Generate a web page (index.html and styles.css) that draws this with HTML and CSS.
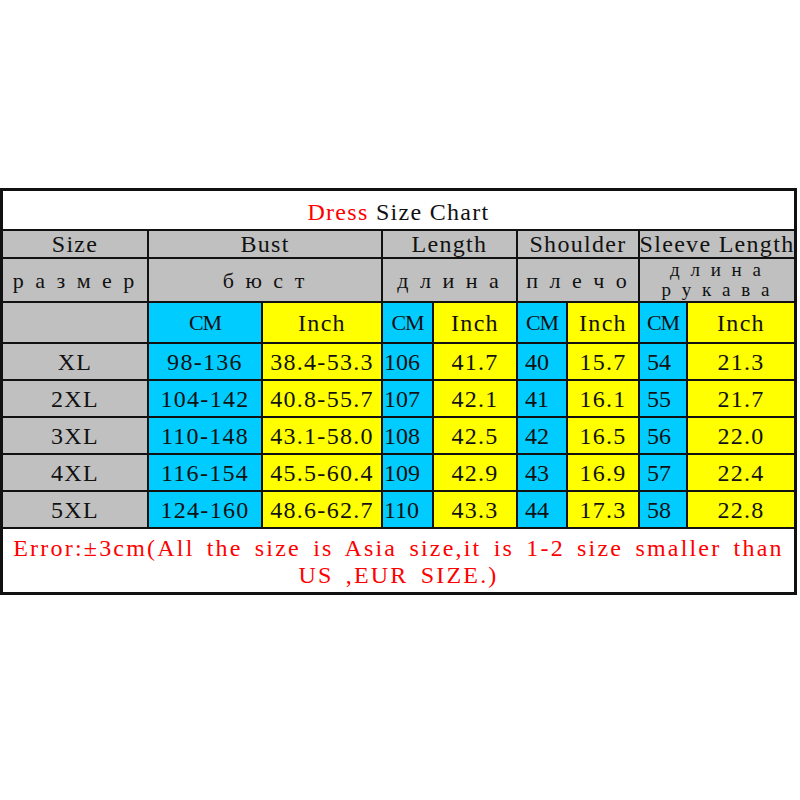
FILE: index.html
```html
<!DOCTYPE html>
<html lang="en">
<head>
  <meta charset="UTF-8" />
  <title>Dress Size Chart</title>
  <link rel="stylesheet" href="styles.css">
</head>
<body>
  <main class="page">
    <div class="chart">
      <div class="cell title full"><span class="red">Dress</span>&nbsp;Size Chart</div>

      <div class="cell head">Size</div>
      <div class="cell head span2">Bust</div>
      <div class="cell head span2">Length</div>
      <div class="cell head span2">Shoulder</div>
      <div class="cell head span2">Sleeve Length</div>

      <div class="cell head ru">р а з м е р</div>
      <div class="cell head span2 ru">б ю с т</div>
      <div class="cell head span2 ru">д л и н а</div>
      <div class="cell head span2 ru">п л е ч о</div>
      <div class="cell head span2 ru two-line">д л и н а<br>р у к а в а</div>

      <div class="cell head"></div>
      <div class="cell cm unit">CM</div>
      <div class="cell inch">Inch</div>
      <div class="cell cm unit">CM</div>
      <div class="cell inch">Inch</div>
      <div class="cell cm unit">CM</div>
      <div class="cell inch">Inch</div>
      <div class="cell cm unit">CM</div>
      <div class="cell inch">Inch</div>

      <div class="cell head">XL</div>
      <div class="cell cm">98-136</div>
      <div class="cell inch">38.4-53.3</div>
      <div class="cell cm left">106</div>
      <div class="cell inch">41.7</div>
      <div class="cell cm left pad">40</div>
      <div class="cell inch">15.7</div>
      <div class="cell cm left pad">54</div>
      <div class="cell inch">21.3</div>

      <div class="cell head">2XL</div>
      <div class="cell cm">104-142</div>
      <div class="cell inch">40.8-55.7</div>
      <div class="cell cm left">107</div>
      <div class="cell inch">42.1</div>
      <div class="cell cm left pad">41</div>
      <div class="cell inch">16.1</div>
      <div class="cell cm left pad">55</div>
      <div class="cell inch">21.7</div>

      <div class="cell head">3XL</div>
      <div class="cell cm">110-148</div>
      <div class="cell inch">43.1-58.0</div>
      <div class="cell cm left">108</div>
      <div class="cell inch">42.5</div>
      <div class="cell cm left pad">42</div>
      <div class="cell inch">16.5</div>
      <div class="cell cm left pad">56</div>
      <div class="cell inch">22.0</div>

      <div class="cell head">4XL</div>
      <div class="cell cm">116-154</div>
      <div class="cell inch">45.5-60.4</div>
      <div class="cell cm left">109</div>
      <div class="cell inch">42.9</div>
      <div class="cell cm left pad">43</div>
      <div class="cell inch">16.9</div>
      <div class="cell cm left pad">57</div>
      <div class="cell inch">22.4</div>

      <div class="cell head">5XL</div>
      <div class="cell cm">124-160</div>
      <div class="cell inch">48.6-62.7</div>
      <div class="cell cm left">110</div>
      <div class="cell inch">43.3</div>
      <div class="cell cm left pad">44</div>
      <div class="cell inch">17.3</div>
      <div class="cell cm left pad">58</div>
      <div class="cell inch">22.8</div>

      <div class="cell note full">Error:±3cm(All the size is Asia size,it is 1-2 size smaller than US ,EUR SIZE.)</div>
    </div>
  </main>
</body>
</html>
```

FILE: styles.css
```css
body {
  margin: 0;
  padding: 0;
  background: #fff;
  font-family: "Liberation Serif", "Times New Roman", serif;
  font-size: 24px;
  letter-spacing: 1.3px;
  color: #111;
}
.page {
  padding: 188px 3px 0 0;
}
.chart {
  display: grid;
  grid-template-columns: 144px 112px 118px 49px 82px 48px 70px 46px 106px;
  grid-template-rows: 38px 26px 42px 39px repeat(5, 35px) 63px;
  gap: 2px;
  border: 3px solid #111;
  background: #111;
  width: 791px;
}
.cell {
  display: flex;
  align-items: center;
  justify-content: center;
  white-space: nowrap;
  overflow: hidden;
  line-height: 24px;
}
.full {
  grid-column: 1 / -1;
}
.span2 {
  grid-column: span 2;
}
.title {
  background: #fff;
  padding-top: 4px;
  box-sizing: border-box;
}
.red {
  color: #f00;
}
.head {
  background: #c0c0c0;
}
.ru {
  font-size: 22px;
  letter-spacing: 3px;
  padding-top: 2px;
}
.two-line {
  flex-direction: column;
  justify-content: flex-start;
  font-size: 19px;
  line-height: 20px;
  padding-top: 1px;
  text-align: center;
}
.cm {
  background: #00ccff;
}
.unit {
  font-size: 22px;
  letter-spacing: -1px;
}
.inch {
  background: #ffff00;
}
.left {
  justify-content: flex-start;
  padding-left: 1px;
  letter-spacing: 0;
}
.left.pad {
  padding-left: 7px;
}
.note {
  background: #fff;
  color: #f00;
  white-space: normal;
  text-align: center;
  line-height: 27px;
  letter-spacing: 2.2px;
  word-spacing: 4px;
  align-items: flex-start;
  padding: 6px 4px 0;
}
```
